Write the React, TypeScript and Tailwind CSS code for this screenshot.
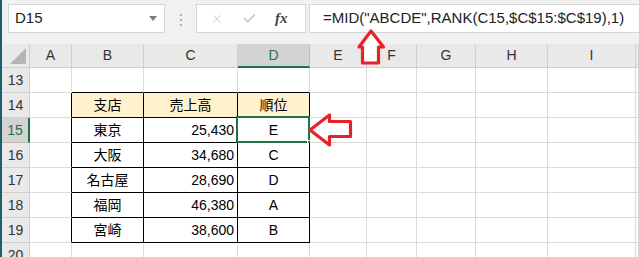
import { X, Check } from 'lucide-react';

const cols = ['A', 'B', 'C', 'D', 'E', 'F', 'G', 'H', 'I', 'J'];

const rows = [
  { n: 13, cells: ['', '', ''] },
  { n: 14, cells: ['支店', '売上高', '順位'] },
  { n: 15, cells: ['東京', '25,430', 'E'] },
  { n: 16, cells: ['大阪', '34,680', 'C'] },
  { n: 17, cells: ['名古屋', '28,690', 'D'] },
  { n: 18, cells: ['福岡', '46,380', 'A'] },
  { n: 19, cells: ['宮崎', '38,600', 'B'] },
  { n: 20, cells: ['', '', ''] },
];

const font = { fontFamily: '"Liberation Sans", "Noto Sans CJK JP", sans-serif' };

function Cell({ row, col }: { row: number; col: number }) {
  const r = rows[row];
  const inTable = r.n >= 14 && r.n <= 19;
  const tableCol = col >= 1 && col <= 3;
  const text = tableCol ? r.cells[col - 1] : '';

  // border colours: table edges are black, the rest light grid
  const right =
    (inTable && (tableCol || col === 0)) ? 'border-r-black' : 'border-r-[#dadada]';
  const bottom =
    (tableCol && (inTable || r.n === 13)) ? 'border-b-black' : 'border-b-[#dadada]';
  const bg = r.n === 14 && tableCol ? 'bg-[#fff2cc]' : 'bg-white';
  const align =
    col === 2 && r.n !== 14 ? 'justify-end pr-[3px]' : 'justify-center';
  const selected = r.n === 15 && col === 3;

  return (
    <div
      className={`relative flex items-center border-r border-b ${right} ${bottom} ${bg} ${align} text-[14px] text-black`}
    >
      {text}
      {selected && (
        <>
          <div className="absolute -left-[2px] -top-[2px] -right-[1px] -bottom-[1px] border-2 border-[#217346]" />
          <div className="absolute -right-[4px] -bottom-[4px] w-[6px] h-[6px] bg-[#217346] border border-white" />
        </>
      )}
    </div>
  );
}

export default function App() {
  return (
    <div
      className="relative w-[639px] h-[257px] overflow-hidden bg-white border-l-2 border-[#1f5c6c]"
      style={font}
    >
      {/* formula bar */}
      <div className="flex items-start h-[44px] bg-[#f1f1f1] pt-[4px] pl-[6px]">
        <div className="flex items-center justify-between w-[157px] h-[29px] bg-white border border-[#d6d6d6] pl-[6px] pr-[7px] text-[15px] text-[#222]">
          D15
          <svg width="8" height="5" viewBox="0 0 8 5">
            <polygon points="0,0 8,0 4,5" fill="#7a7a7a" />
          </svg>
        </div>
        <div className="flex flex-col gap-[3px] w-[31px] items-center pt-[10px]">
          <div className="w-[2px] h-[2px] bg-[#b0b0b0]" />
          <div className="w-[2px] h-[2px] bg-[#b0b0b0]" />
          <div className="w-[2px] h-[2px] bg-[#b0b0b0]" />
        </div>
        <div className="flex items-center w-[110px] h-[29px] bg-white border border-[#d6d6d6]">
          <X size={14} strokeWidth={1.6} className="ml-[13px] text-[#c8c8c8]" />
          <Check size={15} strokeWidth={2.6} className="ml-[18px] text-[#c8c8c8]" />
          <span
            className="ml-[18px] text-[15px] italic font-bold text-[#444]"
            style={{ fontFamily: '"Liberation Serif", serif' }}
          >
            fx
          </span>
        </div>
        <div className="flex items-center flex-1 h-[29px] ml-[3px] bg-white border border-[#d6d6d6] border-r-0 pl-[13px] text-[15px] text-[#222] whitespace-nowrap">
          =MID("ABCDE",RANK(C15,$C$15:$C$19),1)
        </div>
      </div>

      {/* sheet */}
      <div className="grid grid-cols-[28px_42px_72px_94px_72px_57px_50px_59px_72px_88px_1fr] grid-rows-[24px_repeat(8,25px)]">
        <div className="relative bg-[#e9e9e9] border-r border-b border-[#cfcfcf]">
          <svg className="absolute right-[3px] bottom-[3px]" width="16" height="16" viewBox="0 0 16 16">
            <polygon points="16,0 16,16 0,16" fill="#b6b6b6" />
          </svg>
        </div>
        {cols.map((c) =>
          c === 'D' ? (
            <div
              key={c}
              className="flex items-center justify-center bg-[#d3d3d3] border-r border-[#bdbdbd] border-b-2 border-b-[#217346] text-[14px] text-[#217346]"
            >
              {c}
            </div>
          ) : (
            <div
              key={c}
              className="flex items-center justify-center bg-[#e9e9e9] border-r border-b border-[#d0d0d0] text-[14px] text-[#333]"
            >
              {c === 'J' ? '' : c}
            </div>
          )
        )}

        {rows.map((r, ri) => (
          <div key={r.n} className="contents">
            {r.n === 15 ? (
              <div className="flex items-center justify-center bg-[#d3d3d3] border-r-2 border-r-[#217346] border-b border-b-[#bdbdbd] text-[14px] text-[#217346]">
                {r.n}
              </div>
            ) : (
              <div className="flex items-center justify-center bg-[#e9e9e9] border-r border-b border-[#d0d0d0] text-[14px] text-[#333]">
                {r.n}
              </div>
            )}
            {cols.map((c, ci) => (
              <Cell key={c} row={ri} col={ci} />
            ))}
          </div>
        ))}
      </div>

      {/* red callout arrows */}
      <svg className="absolute left-0 top-0 pointer-events-none" width="639" height="257" viewBox="2 0 639 257">
        <polygon
          points="371,31 383.5,47 378.5,47 378.5,63 362.5,63 362.5,47 359,47"
          fill="white"
          stroke="#e8202a"
          strokeWidth="3.2"
          strokeLinejoin="round"
        />
        <polygon
          points="310,130 329.5,115 329.5,121.5 350.5,121.5 350.5,136.5 329.5,136.5 329.5,145"
          fill="white"
          stroke="#e8202a"
          strokeWidth="3.2"
          strokeLinejoin="round"
        />
      </svg>
    </div>
  );
}
